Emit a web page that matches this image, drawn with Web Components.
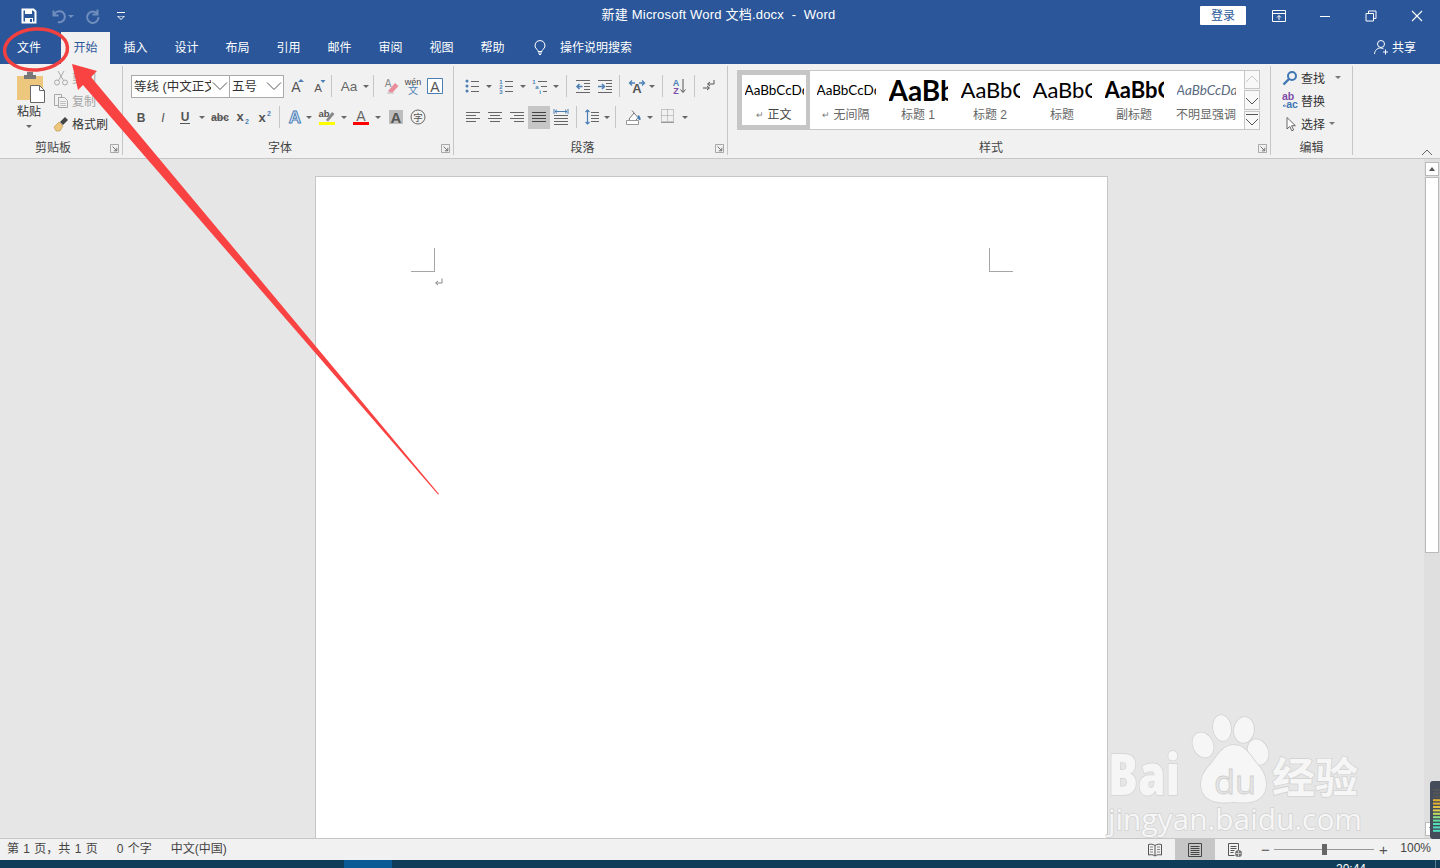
<!DOCTYPE html>
<html lang="zh-CN">
<head>
<meta charset="utf-8">
<title>新建 Microsoft Word 文档.docx - Word</title>
<style>
    html, body { margin: 0; height: 100%; overflow: hidden; }
    body {
        position: relative;
        width: 1440px;
        height: 868px;
        display: flex;
        flex-direction: column;
        font: 12px "Liberation Sans", "Noto Sans CJK SC", sans-serif;
        color: #444;
        background: #e6e6e6;
    }
    word-document-area { flex: 1; min-height: 0; }
</style>
</head>
<body>
<word-titlebar></word-titlebar>
<word-tabbar>
    <word-tab wide>文件</word-tab>
    <word-tab active>开始</word-tab>
    <word-tab>插入</word-tab>
    <word-tab>设计</word-tab>
    <word-tab>布局</word-tab>
    <word-tab>引用</word-tab>
    <word-tab>邮件</word-tab>
    <word-tab>审阅</word-tab>
    <word-tab>视图</word-tab>
    <word-tab>帮助</word-tab>
</word-tabbar>

<word-ribbon>
    <ribbon-group label="剪贴板" width="123" launcher>
        <clipboard-tools></clipboard-tools>
    </ribbon-group>

    <ribbon-group label="字体" width="331" launcher>
        <tool-row pad="7" top="9">
            <font-combo text="等线 (中文正文)" width="99" style="margin-left:1px"></font-combo>
            <font-combo text="五号" width="55"></font-combo>
            <tool-btn icon="grow" l="3"></tool-btn>
            <tool-btn icon="shrink"></tool-btn>
            <tool-sep l="1" r="5"></tool-sep>
            <tool-btn icon="case" w="24" caret="10"></tool-btn>
            <tool-sep l="2" r="6"></tool-sep>
            <tool-btn icon="eraser"></tool-btn>
            <tool-btn icon="wen"></tool-btn>
            <tool-btn icon="boxa"></tool-btn>
        </tool-row>
        <tool-row pad="7" top="9">
            <tool-btn icon="bold"></tool-btn>
            <tool-btn icon="italic"></tool-btn>
            <tool-btn icon="under" caret="12"></tool-btn>
            <tool-btn icon="strike" l="1"></tool-btn>
            <tool-btn icon="sub"></tool-btn>
            <tool-btn icon="sup"></tool-btn>
            <tool-sep l="4" r="4"></tool-sep>
            <tool-btn icon="effect" caret="6"></tool-btn>
            <tool-btn icon="marker" l="4" caret="12"></tool-btn>
            <tool-btn icon="color" caret="12"></tool-btn>
            <tool-btn icon="shadea" l="1"></tool-btn>
            <tool-btn icon="zi"></tool-btn>
        </tool-row>
    </ribbon-group>

    <ribbon-group label="段落" width="274" launcher>
        <tool-row pad="7" top="9">
            <tool-btn icon="bullets" caret="12"></tool-btn>
            <tool-btn icon="numbers" caret="12"></tool-btn>
            <tool-btn icon="multi" caret="10"></tool-btn>
            <tool-sep l="5" r="5"></tool-sep>
            <tool-btn icon="outdent"></tool-btn>
            <tool-btn icon="indent"></tool-btn>
            <tool-sep l="3" r="6"></tool-sep>
            <tool-btn icon="direction" w="22" caret="8"></tool-btn>
            <tool-sep l="6" r="5"></tool-sep>
            <tool-btn icon="sort"></tool-btn>
            <tool-sep l="4" r="3"></tool-sep>
            <tool-btn icon="pilcrow"></tool-btn>
        </tool-row>
        <tool-row pad="8" top="9">
            <tool-btn icon="left"></tool-btn>
            <tool-btn icon="center"></tool-btn>
            <tool-btn icon="right"></tool-btn>
            <tool-btn icon="justify" active></tool-btn>
            <tool-btn icon="distribute"></tool-btn>
            <tool-sep l="4" r="4"></tool-sep>
            <tool-btn icon="spacing" caret="8"></tool-btn>
            <tool-sep l="4" r="3"></tool-sep>
            <tool-btn icon="shading" l="4" caret="10"></tool-btn>
            <tool-btn icon="borders" l="2" caret="12"></tool-btn>
        </tool-row>
    </ribbon-group>

    <ribbon-group label="样式" width="543" launcher>
        <style-gallery>
            <style-item sample="AaBbCcDd" label="正文" mark selected></style-item>
            <style-item sample="AaBbCcDd" label="无间隔" mark></style-item>
            <style-item sample="AaBb" label="标题 1" size="28" bold></style-item>
            <style-item sample="AaBbC" label="标题 2" size="22"></style-item>
            <style-item sample="AaBbC" label="标题" size="22"></style-item>
            <style-item sample="AaBbC" label="副标题" size="22" bold></style-item>
            <style-item sample="AaBbCcDd" label="不明显强调" italic></style-item>
        </style-gallery>
    </ribbon-group>

    <ribbon-group label="编辑" width="82">
        <edit-tools></edit-tools>
    </ribbon-group>
    <collapse-chevron></collapse-chevron>
</word-ribbon>

<word-document-area></word-document-area>
<word-statusbar></word-statusbar>
<word-taskbar></word-taskbar>

<baidu-watermark></baidu-watermark>
<volume-meter></volume-meter>
<red-annotation></red-annotation>

<script>
// --- Icons ---
const BLUE = '#4a7fb5';
const GREY = '#666';
const lines = (ys, x1, x2, c = GREY) => ys.map((y, i) => {
    const a = Array.isArray(x1) ? x1[i] : x1;
    const b = Array.isArray(x2) ? x2[i] : x2;
    return `<path d="M${a} ${y}H${b}" stroke="${c}" fill="none"/>`;
}).join('');
const label = (t, x, y, size, fill = '#555', extra = '') =>
    `<text x="${x}" y="${y}" font-size="${size}" fill="${fill}" text-anchor="middle" font-family="Liberation Sans, Noto Sans CJK SC, sans-serif" ${extra}>${t}</text>`;

const ICONS = {
    save: `<path d="M1.500 1.500h11l2 2v11h-13z" fill="none" stroke="#fff" stroke-width="2"/><path d="M4 2h7v4H4zM4 10h8v4H4z" fill="#fff"/><path d="M9 11h2v3H9z" fill="#2b579a"/>`,
    undo: `<path d="M3.500 2.500v5h5M4 7.500a5.500 5.500 0 1 1 4 6.500" fill="none" stroke="#6f8dbd" stroke-width="2"/>`,
    redo: `<path d="M12.500 1.500v5h-5M12.500 6A5.700 5.700 0 1 0 13.500 9" fill="none" stroke="#6f8dbd" stroke-width="2"/>`,
    custom: `<path d="M4 4.500h8" stroke="#fff"/><path d="M4 8h8l-4 4z" fill="#fff"/><path d="M5.500 8.500h5L8 11z" fill="#2b579a"/>`,
    bulb: `<path d="M8 1.500a5 5 0 0 1 3 9c-.7.600-1 1.200-1 2H6c0-.8-.3-1.400-1-2a5 5 0 0 1 3-9zM6 14h4M7 15.500h2" fill="none" stroke="#fff"/>`,
    person: `<circle cx="8" cy="5" r="3.500" fill="none" stroke="#fff"/><path d="M1.500 15c.3-3.500 2.600-6 6-6 1.200 0 2 .3 3 .8M12.500 10.500v5M10 13h5" fill="none" stroke="#fff"/>`,
    ribbonopt: `<path d="M1.500 2.500h13v11h-13zM1.500 5.500h13" fill="none" stroke="#fff"/><path d="M8 12V7.500M6 9.500l2-2 2 2" fill="none" stroke="#fff"/>`,
    minimize: `<path d="M3 8.500h10" stroke="#fff"/>`,
    restore: `<path d="M3 5.500h7.500V13H3zM5.500 5.500V3H13v7.500h-2.500" fill="none" stroke="#fff"/>`,
    close: `<path d="M3 3l10 10M13 3L3 13" stroke="#fff" stroke-width="1.100"/>`,
    cut: `<circle cx="4" cy="12.500" r="2.500" fill="none" stroke="#a8a8a8"/><circle cx="12" cy="12.500" r="2.500" fill="none" stroke="#a8a8a8"/><path d="M5.500 10.500L11 1M10.500 10.500L5 1" stroke="#a8a8a8" fill="none"/>`,
    copy: `<path d="M1.500 1.500h7l0 3h-3v8h-4zM5.500 4.500h6l3 3v7h-9z" fill="none" stroke="#a8a8a8"/><path d="M7 8.500h6M7 10.500h6M7 12.500h6" stroke="#c0c0c0"/>`,
    painter: `<path d="M1 11l5-5 4 4-3 5H3z" fill="#eec77e" stroke="#b98e44" stroke-width=".6"/><path d="M7 6l5-5 3 3-5 5z" fill="#444"/>`,
    find: `<circle cx="10" cy="6" r="4" fill="none" stroke="#3f77b5" stroke-width="2"/><path d="M7 9l-5.500 5.500" stroke="#3f77b5" stroke-width="2.400"/>`,
    replace: label('ab', 6, 7, 10.500, '#7f4ea8', 'font-weight="700"') + label('ac', 10, 15, 10.500, '#3f77b5', 'font-weight="700"') + `<path d="M1 13h3M1 13l1.500-1.500" stroke="#3f77b5" fill="none"/>`,
    select: `<path d="M5 1.500v11.500l2.800-2.600 2 4.400 1.800-.8-2-4.300h3.800z" fill="#fff" stroke="#666"/>`,
    launcher: `<path d="M.5 .5h8v8h-8z" fill="none" stroke="#8a8a8a" stroke-width=".7"/><path d="M2.500 2.500l4 4M6.800 3.800v3h-3" fill="none" stroke="#555" stroke-width=".8"/>`,
    grow: label('A', 7, 14, 14) + `<path d="M12 1l3 3H9z" fill="${BLUE}"/>`,
    shrink: label('A', 7, 14, 11.500) + `<path d="M12 5L9.500 2h5z" fill="${BLUE}"/>`,
    case: label('Aa', 8, 13, 13.500, '#666'),
    eraser: label('A', 5, 9, 10, '#888') + `<path d="M5 13l7-8 3.500 3-6 6.500H7z" fill="#ea8d9b"/><path d="M4 15h7" stroke="#bbb"/>`,
    wen: label('wén', 8, 7, 9, '#444') + label('文', 8, 16, 10, BLUE),
    boxa: `<path d="M.5 .5h15v15H.5z" fill="#fff" stroke="${BLUE}"/>` + label('A', 8, 13.500, 14, '#555'),
    bold: label('B', 8, 13, 12, '#555', 'font-weight="700"'),
    italic: label('I', 8, 13, 12, '#555', 'font-style="italic" font-family="Liberation Serif"'),
    under: label('U', 8, 12, 12, '#555', 'font-weight="700"') + `<path d="M3 14.500h10" stroke="#555"/>`,
    strike: label('abc', 8, 12, 10.500, '#555', 'font-weight="700"') + `<path d="M0 9h16" stroke="#555" stroke-width=".8"/>`,
    sub: label('x', 6, 12, 13, '#555', 'font-weight="700"') + label('2', 13, 15, 7, BLUE, 'font-weight="700"'),
    sup: label('x', 6, 13, 13, '#555', 'font-weight="700"') + label('2', 13, 7, 7, BLUE, 'font-weight="700"'),
    effect: `<text x="8" y="14" font-size="17" fill="#e4eefa" stroke="${BLUE}" stroke-width="1" text-anchor="middle" font-family="Liberation Sans" font-weight="700">A</text>`,
    marker: label('ab', 5, 8, 9.500, '#555', 'font-weight="700"') + `<path d="M7 11l6-8 2.500 2-6.500 7.500z" fill="#888"/><path d="M0 13h16v3H0z" fill="#ff0"/>`,
    color: label('A', 8, 12, 14, '#666') + `<path d="M0 13h16v3H0z" fill="#f00"/>`,
    shadea: `<path d="M1 1h14v14H1z" fill="#bdbdbd"/>` + label('A', 8, 13.500, 15, '#555', 'font-weight="700"'),
    zi: `<circle cx="8" cy="8" r="7" fill="none" stroke="#666"/>` + label('字', 8, 11.500, 9.500, '#555'),
    bullets: [3, 8, 13].map(y => `<circle cx="3" cy="${y}" r="1.500" fill="${BLUE}"/>`).join('') + lines([3.500, 8.500, 13.500], 7, 15),
    numbers: [['1', 5.500], ['2', 10.500], ['3', 15.500]].map(([t, y]) => label(t, 3, y, 6, BLUE, 'font-weight="700"')).join('') + lines([3.500, 8.500, 13.500], 7, 15),
    multi: label('1', 2, 6, 6, BLUE, 'font-weight="700"') + label('a', 5, 11, 6, BLUE, 'font-weight="700"') + label('i', 8, 16, 6, BLUE, 'font-weight="700"') + lines([3.500, 8.500, 13.500], [6, 9, 11], 15),
    outdent: lines([2.500, 5.500, 8.500, 11.500, 14.500], [1, 9, 9, 9, 1], 15) + `<path d="M7.500 8.500H2M4.500 6L2 8.500 4.500 11" fill="none" stroke="${BLUE}" stroke-width="1.500"/>`,
    indent: lines([2.500, 5.500, 8.500, 11.500, 14.500], [1, 9, 9, 9, 1], 15) + `<path d="M1 8.500h6M5 6l2.500 2.500L5 11" fill="none" stroke="${BLUE}" stroke-width="1.500"/>`,
    direction: label('A', 8, 15, 13, '#555', 'font-weight="700"') + `<path d="M6 5H1M3 2.500L.5 5 3 7.500M10 5h5M13 2.500L15.500 5 13 7.500" fill="none" stroke="${BLUE}" stroke-width="1.300"/>`,
    sort: label('A', 5, 7.500, 9, BLUE, 'font-weight="700"') + label('Z', 5, 16, 9, '#7f4ea8', 'font-weight="700"') + `<path d="M12 1v13M9.500 11.500l2.500 3 2.500-3" fill="none" stroke="#555"/>`,
    pilcrow: `<path d="M13 2v4H7M9 4L6.500 6 9 8" fill="none" stroke="#555"/><path d="M2 10h6M6 8l2.500 2L6 12" fill="none" stroke="#555"/>`,
    left: lines([3.500, 6.500, 9.500, 12.500], 1, [15, 11, 15, 11]),
    center: lines([3.500, 6.500, 9.500, 12.500], [1, 3, 1, 3], [15, 13, 15, 13]),
    right: lines([3.500, 6.500, 9.500, 12.500], [1, 5, 1, 5], 15),
    justify: lines([3.500, 6.500, 9.500, 12.500], 1, 15, '#444'),
    distribute: lines([6.500, 9.500, 12.500, 15.500], 1, 15) + `<path d="M1 0v5M15 0v5" stroke="${BLUE}"/><path d="M2 2.500h12M4 .7L2 2.500l2 1.800M12 .7l2 1.800-2 1.800" fill="none" stroke="${BLUE}"/>`,
    spacing: lines([3.500, 6.500, 9.500, 12.500], 7, 15) + `<path d="M3.500 1v14M1.500 3l2-2 2 2M1.500 13l2 2 2-2" fill="none" stroke="${BLUE}" stroke-width="1.200"/>`,
    shading: `<path d="M3 10l5-6 4 4.500-3 4H5z" fill="#fff" stroke="#777"/><path d="M6 1.500L9 5" stroke="#777"/><path d="M12 6c2 .5 3 3 2.500 5-1.500.5-2.500-1-3-2z" fill="${BLUE}"/><path d="M.5 11.500h12v4H.5z" fill="#fff" stroke="#999"/>`,
    borders: `<path d="M1.500 .5h12v12h-12zM7.500 .5v12M1.500 6.500h12" fill="none" stroke="#999" stroke-dasharray="1 1"/><path d="M1 13.500h13" stroke="#999"/>`,
    read: `<path d="M8 3.500C6 2 3.500 2 1.500 2.500v10.500C3.500 12.500 6 12.500 8 14c2-1.500 4.500-1.500 6.500-1V2.500C12.500 2 10 2 8 3.500zM8 3.500V14" fill="none" stroke="#555"/><path d="M3 5h3M3 7.500h3M3 10h3M10 5h3M10 7.500h3M10 10h3" stroke="#888"/>`,
    print: `<path d="M1.500 1.500h13v13h-13z" fill="none" stroke="#444"/><path d="M3.500 4.500h9M3.500 6.500h9M3.500 8.500h9M3.500 10.500h9M3.500 12.500h9" stroke="#444"/>`,
    web: `<path d="M1.500 1.500h10v7" fill="none" stroke="#555"/><path d="M1.500 1.500v12h6M3.500 4.500h6M3.500 6.500h6M3.500 8.500h4M3.500 10.500h3" fill="none" stroke="#555"/><circle cx="11.500" cy="11.500" r="3.500" fill="#777"/><path d="M8.500 11.500h6M11.500 8.500v6" stroke="#f1f1f1" stroke-width=".6"/>`
};

class WordIcon extends HTMLElement {
    constructor() {
        super();
        this.attachShadow({ mode: 'open' });
    }
    connectedCallback() {
        const name = this.getAttribute('name');
        const size = this.getAttribute('size') || 16;
        const box = name === 'launcher' ? '0 0 9 9' : '0 0 16 16';
        this.shadowRoot.innerHTML = `
            <style>
                :host { display: inline-flex; flex: none; }
                svg { display: block; overflow: visible; }
            </style>
            <svg width="${size}" height="${size}" viewBox="${box}">${ICONS[name] || ''}</svg>
        `;
    }
}
customElements.define('word-icon', WordIcon);

// --- Title bar ---
class WordTitlebar extends HTMLElement {
    constructor() {
        super();
        this.attachShadow({ mode: 'open' });
        this.shadowRoot.innerHTML = `
            <style>
                :host {
                    display: grid;
                    grid-template-columns: 1fr auto 1fr;
                    height: 32px;
                    background: #2b579a;
                    color: #fff;
                    align-items: center;
                }
                .qat { display: flex; align-items: center; padding-left: 21px; }
                .qat .undo { margin-left: 13px; }
                .qat .caret { width: 0; height: 0; margin: 0 0 0 2px; border: 3px solid transparent; border-top: 3px solid #6f8dbd; border-bottom: 0; }
                .qat .redo { margin-left: 11px; }
                .qat .custom { margin-left: 12px; }
                .title { font-size: 13px; padding-right: 3px; padding-bottom: 5px; white-space: pre; letter-spacing: .2px; }
                .right { display: flex; justify-content: flex-end; align-items: center; }
                .login {
                    width: 46px; height: 19px; margin: 0 10px 2px 0; padding-bottom: 1px; box-sizing: border-box;
                    background: #fff; color: #2b579a; border-radius: 1px;
                    display: flex; align-items: center; justify-content: center;
                }
                .win { width: 46px; height: 32px; display: flex; align-items: center; justify-content: center; }
            </style>
            <div class="qat">
                <word-icon name="save"></word-icon>
                <word-icon class="undo" name="undo"></word-icon>
                <span class="caret"></span>
                <word-icon class="redo" name="redo"></word-icon>
                <word-icon class="custom" name="custom"></word-icon>
            </div>
            <div class="title">新建 Microsoft Word 文档.docx  -  Word</div>
            <div class="right">
                <div class="login">登录</div>
                <div class="win"><word-icon name="ribbonopt"></word-icon></div>
                <div class="win"><word-icon name="minimize"></word-icon></div>
                <div class="win"><word-icon name="restore"></word-icon></div>
                <div class="win"><word-icon name="close"></word-icon></div>
            </div>
        `;
    }
}
customElements.define('word-titlebar', WordTitlebar);

// --- Tabs ---
class WordTabbar extends HTMLElement {
    constructor() {
        super();
        this.attachShadow({ mode: 'open' });
        this.shadowRoot.innerHTML = `
            <style>
                :host {
                    display: flex;
                    height: 32px;
                    background: #2b579a;
                    color: #fff;
                }
                .search { display: flex; align-items: center; gap: 12px; margin-left: 14px; padding-bottom: 3px; }
                .share { display: flex; align-items: center; gap: 3px; margin-left: auto; margin-right: 24px; padding-bottom: 3px; }
            </style>
            <slot></slot>
            <div class="search"><word-icon name="bulb"></word-icon><span>操作说明搜索</span></div>
            <div class="share"><word-icon name="person"></word-icon><span>共享</span></div>
        `;
    }
}
customElements.define('word-tabbar', WordTabbar);

class WordTab extends HTMLElement {
    constructor() {
        super();
        this.attachShadow({ mode: 'open' });
        this.shadowRoot.innerHTML = `
            <style>
                :host {
                    display: flex;
                    box-sizing: border-box;
                    width: 51px;
                    padding-bottom: 3px;
                    align-items: center;
                    justify-content: center;
                }
                :host([wide]) { width: 61px; padding-right: 3px; }
                :host([active]) { background: #f1f1f1; color: #2b579a; width: 49px; }
            </style>
            <slot></slot>
        `;
    }
}
customElements.define('word-tab', WordTab);

// --- Ribbon ---
class WordRibbon extends HTMLElement {
    constructor() {
        super();
        this.attachShadow({ mode: 'open' });
        this.shadowRoot.innerHTML = `
            <style>
                :host {
                    display: flex;
                    height: 95px;
                    box-sizing: border-box;
                    padding-top: 2px;
                    background: #f1f1f1;
                    border-bottom: 1px solid #c6c6c6;
                    color: #444;
                }
            </style>
            <slot></slot>
        `;
    }
}
customElements.define('word-ribbon', WordRibbon);

class RibbonGroup extends HTMLElement {
    constructor() {
        super();
        this.attachShadow({ mode: 'open' });
    }
    connectedCallback() {
        const launcher = this.hasAttribute('launcher');
        this.shadowRoot.innerHTML = `
            <style>
                :host {
                    display: flex;
                    flex-direction: column;
                    flex: none;
                    box-sizing: border-box;
                    width: ${this.getAttribute('width')}px;
                    height: 89px;
                    border-right: 1px solid #c6c6c6;
                }
                .body { height: 72px; }
                .foot { display: flex; align-items: center; height: 17px; }
                .name { flex: 1; text-align: center; }
                .launch { width: 16px; display: flex; justify-content: flex-end; padding: 4px 3px 0 0; box-sizing: border-box; }
            </style>
            <div class="body"><slot></slot></div>
            <div class="foot">
                <span class="name">${this.getAttribute('label')}</span>
                ${launcher ? '<span class="launch"><word-icon name="launcher" size="9"></word-icon></span>' : ''}
            </div>
        `;
    }
}
customElements.define('ribbon-group', RibbonGroup);

class ToolRow extends HTMLElement {
    constructor() {
        super();
        this.attachShadow({ mode: 'open' });
    }
    connectedCallback() {
        this.shadowRoot.innerHTML = `
            <style>
                :host {
                    display: flex;
                    align-items: center;
                    height: 22px;
                    margin-top: ${this.getAttribute('top') || 0}px;
                    padding-left: ${this.getAttribute('pad') || 0}px;
                }
            </style>
            <slot></slot>
        `;
    }
}
customElements.define('tool-row', ToolRow);

class ToolBtn extends HTMLElement {
    constructor() {
        super();
        this.attachShadow({ mode: 'open' });
    }
    connectedCallback() {
        const w = this.getAttribute('w') || 22;
        const caret = this.getAttribute('caret');
        this.shadowRoot.innerHTML = `
            <style>
                :host {
                    display: flex;
                    flex: none;
                    align-items: center;
                    height: 23px;
                    margin-left: ${this.getAttribute('l') || 0}px;
                }
                .ic { width: ${w}px; height: 23px; display: flex; align-items: center; justify-content: center; }
                :host([active]) .ic { background: #c6c6c6; }
                .caret { width: ${caret || 0}px; display: flex; justify-content: center; }
                .caret i { width: 0; height: 0; border: 3px solid transparent; border-top: 3px solid #666; border-bottom: 0; }
            </style>
            <span class="ic"><word-icon name="${this.getAttribute('icon')}"></word-icon></span>
            ${caret ? '<span class="caret"><i></i></span>' : ''}
        `;
    }
}
customElements.define('tool-btn', ToolBtn);

class ToolSep extends HTMLElement {
    constructor() {
        super();
        this.attachShadow({ mode: 'open' });
    }
    connectedCallback() {
        this.shadowRoot.innerHTML = `
            <style>
                :host {
                    display: block;
                    flex: none;
                    width: 1px;
                    height: 22px;
                    background: #c6c6c6;
                    margin: 0 ${this.getAttribute('r') || 3}px 0 ${this.getAttribute('l') || 3}px;
                }
            </style>
        `;
    }
}
customElements.define('tool-sep', ToolSep);

class FontCombo extends HTMLElement {
    constructor() {
        super();
        this.attachShadow({ mode: 'open' });
    }
    connectedCallback() {
        this.shadowRoot.innerHTML = `
            <style>
                :host {
                    display: flex;
                    flex: none;
                    box-sizing: border-box;
                    width: ${this.getAttribute('width')}px;
                    height: 23px;
                    background: #fff;
                    border: 1px solid #aaa;
                    margin-right: -1px;
                    padding-bottom: 1px;
                    align-items: center;
                    color: #333;
                    font-size: 12.5px;
                }
                .t { flex: 1; min-width: 0; overflow: hidden; white-space: nowrap; padding-left: 2px; }
                svg { width: 16px; height: 10px; margin: 0 1px; flex: none; }
            </style>
            <span class="t">${this.getAttribute('text')}</span>
            <svg viewBox="0 0 16 10"><path d="M1 1.500l7 7 7-7" fill="none" stroke="#555"/></svg>
        `;
    }
}
customElements.define('font-combo', FontCombo);

class ClipboardTools extends HTMLElement {
    constructor() {
        super();
        this.attachShadow({ mode: 'open' });
        this.shadowRoot.innerHTML = `
            <style>
                :host { display: flex; height: 72px; }
                .paste { width: 53px; padding-left: 5px; box-sizing: border-box; display: flex; flex-direction: column; align-items: center; }
                .paste svg { display: block; margin-top: 6px; margin-left: 3px; }
                .paste span { margin-top: 1px; color: #333; line-height: 16px; }
                .paste i { display: block; width: 0; height: 0; margin-top: 5px; border: 3px solid transparent; border-top: 3px solid #666; border-bottom: 0; }
                .rows { display: flex; flex-direction: column; padding-top: 0; }
                .row { display: flex; align-items: center; gap: 3px; height: 23px; color: #a6a6a6; }
                .row.on { color: #333; }
            </style>
            <div class="paste">
                <svg width="30" height="31" viewBox="0 0 30 31">
                    <path d="M1 4h26v24H1z" fill="#eec77e"/>
                    <path d="M8 3h12v4H8zM11 0h6v4h-6z" fill="#777"/>
                    <path d="M14.500 13.500h9l5 5v12h-14z" fill="#fff" stroke="#666"/>
                    <path d="M23.500 13.500v5h5" fill="none" stroke="#666"/>
                </svg>
                <span>粘贴</span>
                <i></i>
            </div>
            <div class="rows">
                <div class="row"><word-icon name="cut"></word-icon><span>剪切</span></div>
                <div class="row"><word-icon name="copy"></word-icon><span>复制</span></div>
                <div class="row on"><word-icon name="painter"></word-icon><span>格式刷</span></div>
            </div>
        `;
    }
}
customElements.define('clipboard-tools', ClipboardTools);

class EditTools extends HTMLElement {
    constructor() {
        super();
        this.attachShadow({ mode: 'open' });
        this.shadowRoot.innerHTML = `
            <style>
                :host { display: flex; flex-direction: column; padding-left: 11px; }
                .row { display: flex; align-items: center; gap: 3px; height: 23px; color: #333; }
                .row i { width: 0; height: 0; margin-left: 6px; border: 3px solid transparent; border-top: 3px solid #777; border-bottom: 0; }
                .row.near i { margin-left: 1px; }
                .row.far i { margin-left: 7px; }
            </style>
            <div class="row far"><word-icon name="find"></word-icon><span>查找</span><i></i></div>
            <div class="row"><word-icon name="replace"></word-icon><span>替换</span></div>
            <div class="row near"><word-icon name="select"></word-icon><span>选择</span><i></i></div>
        `;
    }
}
customElements.define('edit-tools', EditTools);

class StyleGallery extends HTMLElement {
    constructor() {
        super();
        this.attachShadow({ mode: 'open' });
        this.shadowRoot.innerHTML = `
            <style>
                :host { display: flex; margin: 4px 0 0 9px; height: 60px; width: 523px; }
                .items {
                    display: flex;
                    width: 507px;
                    box-sizing: border-box;
                    background: #fff;
                    border: 1px solid #c6c6c6;
                    border-right: 0;
                }
                .scroll { display: flex; flex-direction: column; width: 16px; }
                .scroll span {
                    flex: 1;
                    box-sizing: border-box;
                    border: 1px solid #c6c6c6;
                    display: flex;
                    align-items: center;
                    justify-content: center;
                    background: #f8f8f8;
                }
                .scroll span + span { margin-top: 1px; }
                svg { width: 14px; height: 14px; display: block; }
            </style>
            <div class="items"><slot></slot></div>
            <div class="scroll">
                <span><svg viewBox="0 0 14 14"><path d="M1 9l6-6 6 6" fill="none" stroke="#c6c6c6"/></svg></span>
                <span><svg viewBox="0 0 14 14"><path d="M1 5l6 6 6-6" fill="none" stroke="#555"/></svg></span>
                <span><svg viewBox="0 0 14 14"><path d="M1 1.500h12M1 6l6 6 6-6" fill="none" stroke="#555"/></svg></span>
            </div>
        `;
    }
}
customElements.define('style-gallery', StyleGallery);

class StyleItem extends HTMLElement {
    constructor() {
        super();
        this.attachShadow({ mode: 'open' });
    }
    connectedCallback() {
        const size = this.getAttribute('size') || 13.5;
        this.shadowRoot.innerHTML = `
            <style>
                :host {
                    display: flex;
                    flex-direction: column;
                    align-items: center;
                    flex: none;
                    box-sizing: border-box;
                    width: 72px;
                    height: 58px;
                    padding: 4px 6px 0;
                }
                :host([selected]) { padding: 0 2px; border: 4px solid #c6c6c6; }
                .sample {
                    width: 59px;
                    height: 32px;
                    line-height: 30px;
                    overflow: hidden;
                    white-space: nowrap;
                    text-align: left;
                    color: #000;
                    font-family: Lato, "Open Sans", sans-serif;
                    font-size: ${size}px;
                    font-weight: ${this.hasAttribute('bold') ? 700 : 400};
                    font-style: ${this.hasAttribute('italic') ? 'italic' : 'normal'};
                }
                :host([italic]) .sample { color: #5a6a80; }
                .name { color: #666; white-space: nowrap; display: flex; align-items: center; gap: 3px; line-height: 17px; }
                :host([selected]) .name { color: #444; }
                .m { color: #777; font-size: 9px; }
            </style>
            <div class="sample">${this.getAttribute('sample')}</div>
            <div class="name">${this.hasAttribute('mark') ? '<span class="m">↵</span>' : ''}<span>${this.getAttribute('label')}</span></div>
        `;
    }
}
customElements.define('style-item', StyleItem);

class CollapseChevron extends HTMLElement {
    constructor() {
        super();
        this.attachShadow({ mode: 'open' });
        this.shadowRoot.innerHTML = `
            <style>
                :host { display: flex; flex: 1; align-items: flex-end; justify-content: flex-end; height: 90px; padding-right: 7px; }
                svg { width: 12px; height: 8px; display: block; }
            </style>
            <svg viewBox="0 0 12 8"><path d="M1 7l5-5 5 5" fill="none" stroke="#666"/></svg>
        `;
    }
}
customElements.define('collapse-chevron', CollapseChevron);

// --- Document ---
class WordDocumentArea extends HTMLElement {
    constructor() {
        super();
        this.attachShadow({ mode: 'open' });
        this.shadowRoot.innerHTML = `
            <style>
                :host { display: flex; background: #e6e6e6; overflow: hidden; }
                .view { flex: 1; display: flex; padding: 17px 0 0 315px; overflow: hidden; }
                .page {
                    width: 793px;
                    height: 720px;
                    box-sizing: border-box;
                    background: #fff;
                    border: 1px solid #c6c6c6;
                    padding: 71px 94px 0 95px;
                }
                .marks { display: flex; justify-content: space-between; }
                .corner { width: 24px; height: 24px; box-sizing: border-box; border-bottom: 1px solid #a6a6a6; }
                .corner.l { border-right: 1px solid #a6a6a6; }
                .corner.r { border-left: 1px solid #a6a6a6; }
                .para { display: block; margin: 6px 0 0 23px; }
                .bar { width: 16px; display: flex; flex-direction: column; background: #dfdfdf; padding-top: 3px; box-sizing: border-box; }
                .btn { height: 14px; margin: 0 0 1px 1px; width: 14px; box-sizing: border-box; background: #fff; border: 1px solid #bbb; display: flex; align-items: center; justify-content: center; }
                .btn i { width: 0; height: 0; border: 3px solid transparent; border-bottom: 4px solid #555; border-top: 0; }
                .btn.down { margin-top: auto; margin-bottom: 2px; }
                .btn.down i { border-top: 4px solid #555; border-bottom: 0; }
                .thumb { height: 376px; margin-left: 1px; width: 14px; background: #fff; border: 1px solid #bbb; box-sizing: border-box; }
            </style>
            <div class="view">
                <div class="page">
                    <div class="marks"><div class="corner l"></div><div class="corner r"></div></div>
                    <svg class="para" width="9" height="9" viewBox="0 0 9 9"><path d="M8 .5v4.500H2M4 3L1.500 5 4 7" fill="none" stroke="#888"/></svg>
                </div>
            </div>
            <div class="bar">
                <div class="btn"><i></i></div>
                <div class="thumb"></div>
                <div class="btn down"><i></i></div>
            </div>
        `;
    }
}
customElements.define('word-document-area', WordDocumentArea);

// --- Status bar ---
class WordStatusbar extends HTMLElement {
    constructor() {
        super();
        this.attachShadow({ mode: 'open' });
        this.shadowRoot.innerHTML = `
            <style>
                :host {
                    display: flex;
                    align-items: stretch;
                    height: 22px;
                    box-sizing: border-box;
                    border-top: 1px solid #c6c6c6;
                    background: #f1f1f1;
                    color: #444;
                    padding-left: 7px;
                }
                .txt { display: flex; align-items: center; white-space: pre; word-spacing: 1px; padding-bottom: 4px; }
                .txt + .txt { margin-left: 19px; }
                .views { margin-left: auto; display: flex; }
                .v { width: 40px; display: flex; align-items: center; justify-content: center; }
                .v.on { background: #c6c6c6; }
                .zoom { display: flex; align-items: center; margin-left: 4px; }
                .pm { width: 12px; text-align: center; font-size: 15px; line-height: 20px; color: #555; }
                .track { width: 100px; height: 1px; background: #999; margin: 0 3px; display: flex; justify-content: center; align-items: center; }
                .track i { display: block; width: 5px; height: 11px; background: #666; flex: none; }
                .txt.pct { margin-left: 11px; margin-right: 9px; }
            </style>
            <span class="txt">第 1 页，共 1 页</span>
            <span class="txt">0 个字</span>
            <span class="txt">中文(中国)</span>
            <div class="views">
                <span class="v"><word-icon name="read"></word-icon></span>
                <span class="v on"><word-icon name="print"></word-icon></span>
                <span class="v"><word-icon name="web"></word-icon></span>
            </div>
            <div class="zoom">
                <span class="pm">−</span>
                <span class="track"><i></i></span>
                <span class="pm">+</span>
            </div>
            <span class="txt pct">100%</span>
        `;
    }
}
customElements.define('word-statusbar', WordStatusbar);

class WordTaskbar extends HTMLElement {
    constructor() {
        super();
        this.attachShadow({ mode: 'open' });
        this.shadowRoot.innerHTML = `
            <style>
                :host { display: flex; height: 8px; background: #0f3d59; overflow: hidden; color: #fff; }
                .app { width: 48px; margin-left: 344px; background: #0a5a96; }
                .clock { margin-left: auto; margin-right: 69px; line-height: 14px; font-size: 12px; padding-top: 2px; }
                .line { width: 1px; background: #5d7d90; margin-right: 4px; }
            </style>
            <div class="app"></div>
            <div class="clock">20:44</div>
            <div class="line"></div>
        `;
    }
}
customElements.define('word-taskbar', WordTaskbar);

// --- Things lying over the page ---
class BaiduWatermark extends HTMLElement {
    constructor() {
        super();
        this.attachShadow({ mode: 'open' });
        this.shadowRoot.innerHTML = `
            <style>
                :host { position: absolute; left: 1100px; top: 710px; width: 270px; height: 130px; pointer-events: none; }
                svg { display: block; overflow: visible; }
                .w { fill: #f6f6f6; stroke: #d2d2d2; stroke-width: 1.500; paint-order: stroke; }
                text { font-family: "Open Sans", "Noto Sans CJK SC", sans-serif; }
            </style>
            <svg width="270" height="130" viewBox="0 0 270 130">
                <g class="w">
                    <ellipse cx="103" cy="35" rx="10" ry="13" transform="rotate(-25 103 35)"/>
                    <ellipse cx="122" cy="18" rx="9" ry="13" transform="rotate(-8 122 18)"/>
                    <ellipse cx="144" cy="20" rx="10" ry="13" transform="rotate(8 144 20)"/>
                    <ellipse cx="158" cy="42" rx="10" ry="13" transform="rotate(-20 158 42)"/>
                    <path d="M134 35c12 0 17 12 24 20 8 9 10 20 6 28-4 8-14 11-30 9-16 2-27-1-31-9-4-8-2-19 7-28 7-8 12-20 24-20z"/>
                    <text x="8" y="85" font-size="56" font-weight="800" textLength="72" lengthAdjust="spacingAndGlyphs">Bai</text>
                    <text x="172" y="83" font-size="42" font-weight="700" textLength="86" lengthAdjust="spacingAndGlyphs" style="font-family:'Noto Sans CJK SC',sans-serif">经验</text>
                    <text x="8" y="120" font-size="30" textLength="254" lengthAdjust="spacingAndGlyphs">jingyan.baidu.com</text>
                </g>
                <text x="114" y="84" font-size="33" fill="#e6e6e6" stroke="#cfcfcf" stroke-width=".8" textLength="42" lengthAdjust="spacingAndGlyphs">du</text>
            </svg>
        `;
    }
}
customElements.define('baidu-watermark', BaiduWatermark);

class VolumeMeter extends HTMLElement {
    constructor() {
        super();
        this.attachShadow({ mode: 'open' });
        const colors = ['#555', '#555', '#555', '#e0b030', '#e0b030', '#e0c040', '#e0d050', '#c0e060', '#90e080', '#60e0a0', '#50e0b0', '#50e0c0', '#50e0c0'];
        const bars = colors.map((c, i) => `<rect x="3" y="${8 + i * 3.4}" width="7" height="2" fill="${c}"/>`).join('');
        this.shadowRoot.innerHTML = `
            <style>
                :host { position: absolute; left: 1430px; top: 781px; width: 10px; height: 58px; }
                svg { display: block; }
            </style>
            <svg width="10" height="58" viewBox="0 0 10 58">
                <path d="M10 0H3Q0 0 0 3v52q0 3 3 3h7z" fill="#454d5c"/>${bars}
            </svg>
        `;
    }
}
customElements.define('volume-meter', VolumeMeter);

class RedAnnotation extends HTMLElement {
    constructor() {
        super();
        this.attachShadow({ mode: 'open' });
        this.shadowRoot.innerHTML = `
            <style>
                :host { position: absolute; left: 0; top: 0; width: 1440px; height: 868px; pointer-events: none; }
                svg { display: block; }
            </style>
            <svg width="1440" height="868" viewBox="0 0 1440 868">
                <ellipse cx="36" cy="49.500" rx="31.500" ry="20.500" fill="none" stroke="#f04040" stroke-width="3.500" transform="rotate(-4 36 49.500)"/>
                <path d="M72 64L97 71 91 77 439 494 438 494.500 83 85 78 90z" fill="#f94343"/>
            </svg>
        `;
    }
}
customElements.define('red-annotation', RedAnnotation);
</script>
</body>
</html>
